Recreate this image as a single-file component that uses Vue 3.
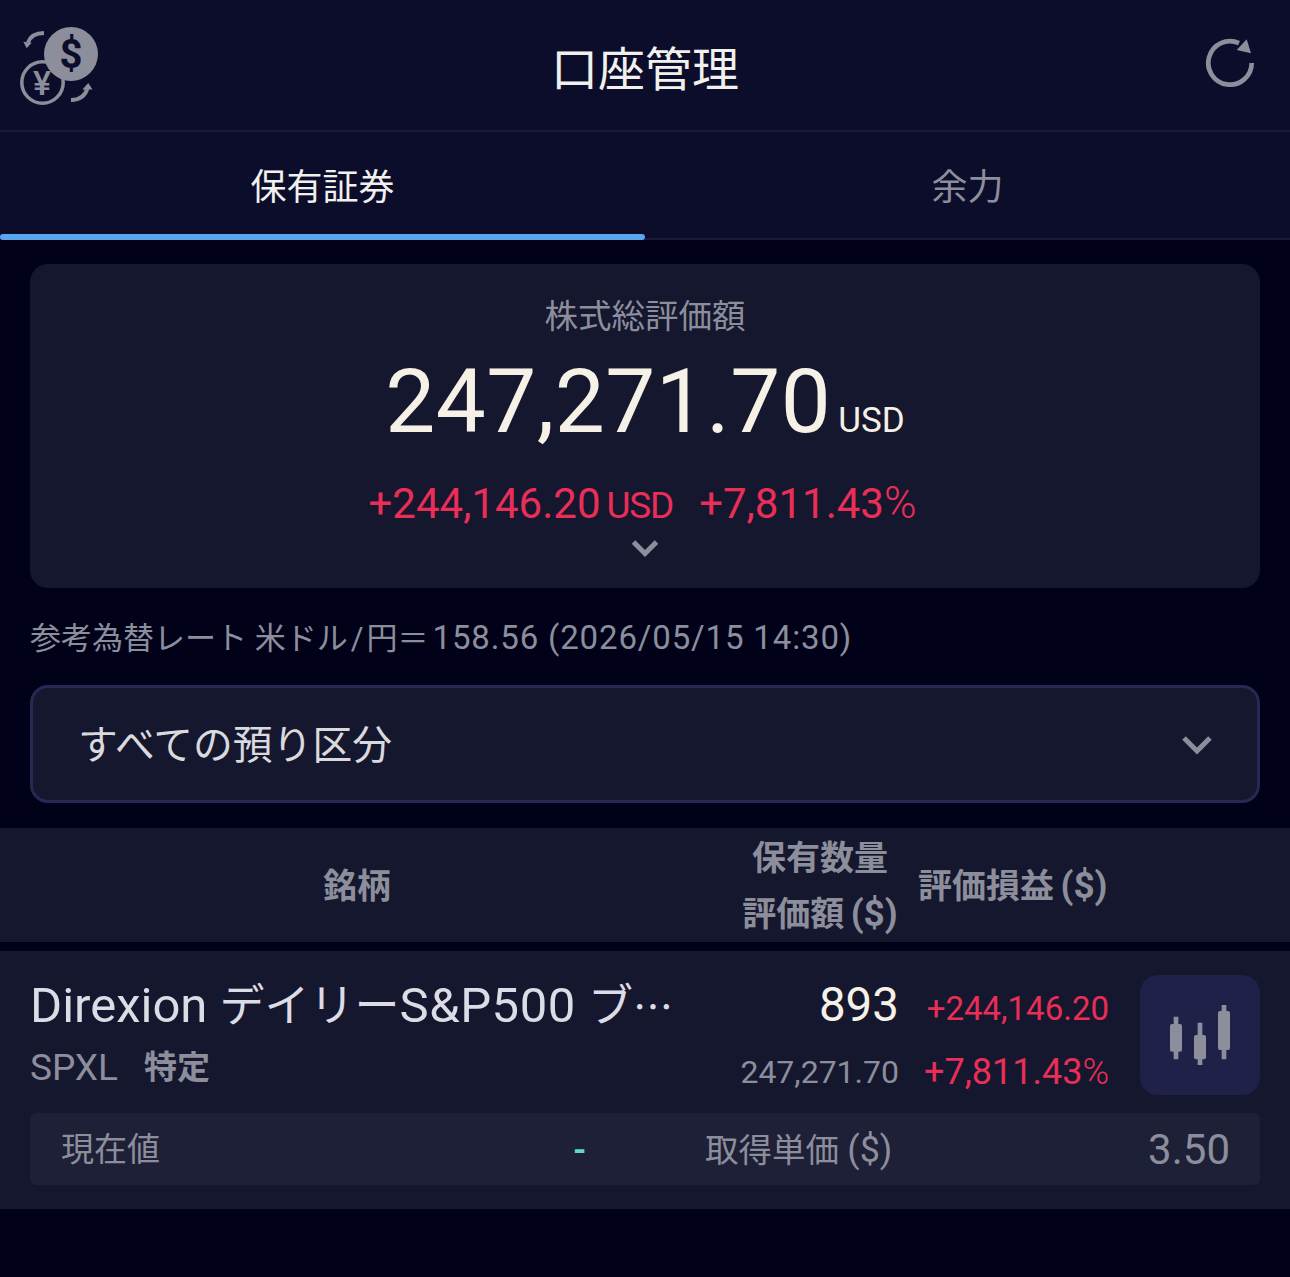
<script setup>
const tabs = [
  { label: '保有証券', active: true },
  { label: '余力', active: false },
]
</script>

<template>
  <div class="page">
    <header class="top">
      <svg class="fx" viewBox="0 0 80 80" width="80" height="80">
        <path class="arc" d="M24 6 C16 6 10.500 9 8 15.500" />
        <path class="fill" d="M3.300 14.700 L11.700 15.700 L6.700 21.300 Z" />
        <circle class="ring" cx="22.500" cy="55.500" r="20.700" />
        <text class="yen" x="22" y="68" text-anchor="middle">¥</text>
        <circle class="fill" cx="51" cy="27" r="27" />
        <text class="usd" x="51" y="40.500" text-anchor="middle">$</text>
        <path class="arc" d="M51 73 C59 73 65 70 67.500 61" />
        <path class="fill" d="M68.300 56 L62.300 62.500 L72.500 62.500 Z" />
      </svg>
      <h1>口座管理</h1>
      <svg class="reload" viewBox="0 0 52 52" width="52" height="52">
        <path class="reload-arc" d="M47.700 27 A21.700 21.700 0 1 1 35 7.200" />
        <path class="reload-head" d="M42.700 3.300 L47 17.300 L32.700 14 Z" />
      </svg>
    </header>

    <nav class="tabs">
      <div v-for="t in tabs" :key="t.label" class="tab" :class="{ on: t.active }">{{ t.label }}</div>
    </nav>

    <main class="body">
      <section class="summary">
        <div class="sum-title">株式総評価額</div>
        <div class="total"><span class="total-num">247,271.70</span><span class="total-unit">USD</span></div>
        <div class="pl">
          <span class="pl-num">+244,146.20</span><span class="pl-unit">USD</span>
          <span class="pl-num pl-pct">+7,811.43</span><span class="pl-sign">%</span>
        </div>
        <svg class="chev-small" viewBox="0 0 28 20" width="28" height="20">
          <path d="M2.500 3 L14 14.500 L25.500 3" />
        </svg>
      </section>

      <p class="rate">参考為替レート 米ドル<span class="slash">/</span>円＝<span class="rate-num">158.56 (2026/05/15 14:30)</span></p>

      <div class="select">
        <span class="select-text">すべての預り区分</span>
        <svg viewBox="0 0 32 22" width="32" height="22"><path d="M3 3 L16 16 L29 3" /></svg>
      </div>
    </main>

    <section class="thead">
      <div class="th-name">銘柄</div>
      <div class="th-qty"><div>保有数量</div><div>評価額 <span class="dol">($)</span></div></div>
      <div class="th-pl">評価損益 <span class="dol">($)</span></div>
    </section>

    <section class="row">
      <div class="row-main">
        <div class="col-name">
          <div class="sec-name">Direxion <span class="jp">デイリー</span><span class="sp">S&amp;P500</span> <span class="jp">ブ</span><span class="ell">…</span></div>
          <div class="sec-sub"><span class="ticker">SPXL</span><span class="acct">特定</span></div>
        </div>
        <div class="col-qty">
          <div class="qty">893</div>
          <div class="val">247,271.70</div>
        </div>
        <div class="col-pl">
          <div class="pl1">+244,146.20</div>
          <div class="pl2">+7,811.43<span class="pl2-sign">%</span></div>
        </div>
        <button class="chart" type="button" aria-label="chart">
          <svg viewBox="0 0 60 60" width="60" height="60">
            <path class="wick" d="M6 11.700 V54.300 M30 17.700 V60 M54 0 V54.300" />
            <rect class="body-c" x="0" y="19" width="12" height="27.700" rx="2" />
            <rect class="body-c" x="24" y="30" width="12" height="24.300" rx="2" />
            <rect class="body-c" x="48" y="6" width="12" height="39" rx="2" />
          </svg>
        </button>
      </div>
      <div class="row-foot">
        <span class="f-label f-now">現在値</span>
        <span class="f-dash">-</span>
        <span class="f-label f-cost">取得単価 <span class="f-dol">($)</span></span>
        <span class="f-val">3.50</span>
      </div>
    </section>
  </div>
</template>

<style>
html, body { margin: 0; background: #01021a; }
</style>

<style scoped>
.page {
  width: 1290px;
  height: 1277px;
  overflow: hidden;
  background: #01021a;
  font-family: Roboto, "Noto Sans CJK JP", sans-serif;
  color: #8d8e9c;
}
.top {
  height: 130px;
  background: #0b0d2a;
  border-bottom: 2px solid #191b38;
  position: relative;
  display: flex;
  align-items: center;
  justify-content: center;
}
.top h1 {
  margin: 0;
  padding-top: 9px;
  font-size: 47px;
  font-weight: 400;
  color: #f1f0ec;
  line-height: 1;
}
.fx { position: absolute; left: 20px; top: 27px; }
.arc { fill: none; stroke: #8d8e9c; stroke-width: 4; }
.fill { fill: #8d8e9c; }
.ring { fill: #0b0d2a; stroke: #8d8e9c; stroke-width: 3.500; }
.yen { font-size: 34px; font-weight: 500; fill: #8d8e9c; font-family: Roboto, sans-serif; }
.usd { font-size: 40px; font-weight: 700; fill: #0b0d2a; font-family: Roboto, sans-serif; }
.reload { position: absolute; left: 1204px; top: 36px; }
.reload-arc { fill: none; stroke: #8d8e9c; stroke-width: 4.700; }
.reload-head { fill: #8d8e9c; }

.tabs {
  display: flex;
  height: 108px;
  box-sizing: border-box;
  background: #0b0d2a;
  border-bottom: 2px solid #191b38;
}
.tab {
  flex: 1;
  position: relative;
  box-sizing: border-box;
  display: flex;
  align-items: center;
  justify-content: center;
  font-size: 36px;
  color: #8d8e9c;
  padding-bottom: 2px;
}
.tab.on { color: #f1f0ec; }
.tab.on::after {
  content: "";
  position: absolute;
  left: 0;
  right: 0;
  bottom: -2px;
  height: 6px;
  border-radius: 3px;
  background: #5aa6ee;
}

.body { padding: 24px 30px 0; }
.summary {
  height: 324px;
  box-sizing: border-box;
  background: #15172e;
  border-radius: 18px;
  padding-top: 32px;
  display: flex;
  flex-direction: column;
  align-items: center;
}
.sum-title { font-size: 33.500px; line-height: 42px; color: #8d8e9c; }
.total { display: flex; align-items: baseline; margin-top: 19px; height: 90px; color: #f5f1e6; }
.total-num { font-size: 89px; line-height: 90px; letter-spacing: 0.5px; }
.total-unit { font-size: 35px; margin-left: 7px; }
.pl { display: flex; align-items: baseline; margin: 30px 5px 0 0; color: #e92e58; height: 48px; }
.pl-num { font-size: 42px; line-height: 48px; }
.pl-unit { font-size: 37px; margin-left: 6px; letter-spacing: -1.200px; }
.pl-pct { margin-left: 26px; }
.pl-sign { font-size: 44px; font-weight: 300; margin-left: 0; }
.chev-small { margin-top: 14px; }
.chev-small path { fill: none; stroke: #8d8e9c; stroke-width: 5; }

.rate { margin: 30px 0 0; font-size: 31px; line-height: 40px; color: #8d8e9c; }
.slash { margin: 0 3px; }
.rate-num { font-size: 33px; letter-spacing: 0.85px; margin-left: 4px; }
.select {
  margin-top: 26px;
  height: 118px;
  box-sizing: border-box;
  background: #15172e;
  border: 3px solid #272955;
  border-radius: 18px;
  padding: 0 44px 0 45px;
  display: flex;
  align-items: center;
  justify-content: space-between;
  font-size: 39.800px;
  color: #d9d9de;
}
.select-text { padding-bottom: 6px; }
.select svg { margin-top: 3px; }
.select svg path { fill: none; stroke: #8d8e9c; stroke-width: 5; }

.thead {
  margin-top: 25px;
  height: 114px;
  background: #15172e;
  display: flex;
  align-items: center;
  font-size: 34px;
  font-weight: 700;
  color: #8d8e9c;
}
.dol { font-size: 37px; margin-left: -2px; }
.th-name { width: 714px; text-align: center; padding-bottom: 4px; }
.th-qty { width: 212px; text-align: center; line-height: 55px; padding-top: 2px; }
.th-pl { width: 190px; text-align: left; white-space: nowrap; margin-left: -8px; padding-bottom: 4px; }

.row { margin-top: 9px; height: 258px; background: #15172e; padding: 0 30px; box-sizing: border-box; }
.row-main { height: 162px; display: flex; align-items: flex-start; }
.col-name { width: 650px; padding-top: 26px; }
.sec-name { font-size: 49px; line-height: 56px; color: #dcdce6; white-space: nowrap; }
.jp { font-size: 45px; }
.sp { letter-spacing: 0.5px; }
.ell { font-size: 40px; font-family: "Noto Sans CJK JP", sans-serif; }
.sec-sub { display: flex; margin-top: 13px; font-size: 33px; line-height: 40px; }
.ticker { width: 114px; font-size: 37px; }
.acct { font-weight: 700; }
.col-qty { width: 219px; text-align: right; }
.qty { margin-top: 27px; font-size: 47.500px; line-height: 54px; color: #f5f1e6; }
.val { margin-top: 19px; font-size: 32px; line-height: 42px; }
.col-pl { width: 210px; text-align: right; color: #e92e58; }
.pl1 { margin-top: 37px; font-size: 33px; line-height: 42px; }
.pl2 { margin-top: 19px; font-size: 36px; line-height: 46px; }
.pl2-sign { font-size: 36px; font-weight: 300; }
.chart {
  margin: 24px 0 0 31px;
  width: 120px;
  height: 120px;
  border: 0;
  padding: 0;
  background: #1f2148;
  border-radius: 18px;
  display: flex;
  align-items: center;
  justify-content: center;
}
.wick { stroke: #8d8e9c; stroke-width: 4.700; fill: none; }
.body-c { fill: #8d8e9c; }
.row-foot {
  height: 72px;
  background: #1d2036;
  border-radius: 6px;
  display: flex;
  align-items: center;
  padding: 0 30px 0 31px;
  font-size: 33px;
}
.f-label { color: #8d8e9c; padding-bottom: 4px; }
.f-now { width: 99px; }
.f-dash { margin-left: 413px; color: #5fd6d2; width: 132px; font-size: 34px; font-weight: 700; }
.f-cost { white-space: nowrap; font-size: 33.500px; }
.f-dol { font-size: 36px; }
.f-val { margin-left: auto; font-size: 42px; color: #8d8e9c; }
</style>
